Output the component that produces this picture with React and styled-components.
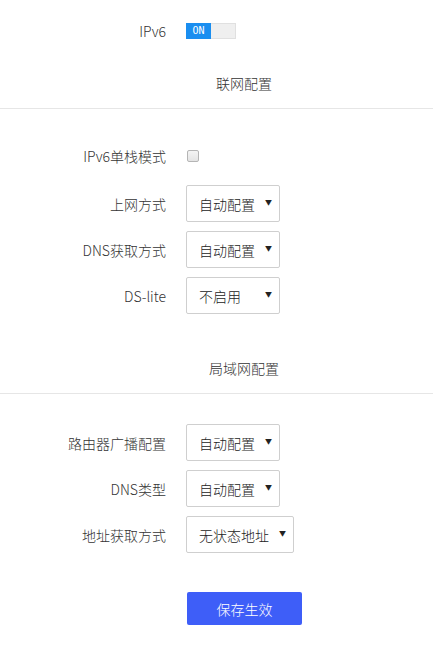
import React from 'react';
import styled, { createGlobalStyle } from 'styled-components';

const GlobalStyle = createGlobalStyle`
  body {
    margin: 0;
    background: #fff;
    font-family: 'Noto Sans CJK SC', 'Noto Sans', sans-serif;
    font-size: 14px;
    font-weight: 300;
    color: #333;
  }
`;

const Page = styled.div`
  width: 433px;
  padding-top: 23px;
  padding-bottom: 32px;
`;

const Row = styled.div`
  display: flex;
  align-items: center;
  gap: 20px;
  height: ${(p) => p.h || 37}px;
  margin-top: ${(p) => p.mt || 0}px;
`;

const Label = styled.div`
  width: 166px;
  text-align: right;
  line-height: 20px;
  color: #333;
  white-space: nowrap;
`;

const Toggle = styled.div`
  display: flex;
  width: 50px;
  height: 16px;
  box-sizing: border-box;
  border: 1px solid #e0e0e0;
  background: #efefef;
`;

const ToggleOn = styled.span`
  width: 25px;
  margin: -1px 0 -1px -1px;
  background: #1a8ef0;
  color: #fff;
  font-family: 'DejaVu Sans Mono', monospace;
  font-weight: 400;
  font-size: 10px;
  line-height: 16px;
  text-align: center;
`;

const SectionTitle = styled.div`
  margin-top: ${(p) => p.mt}px;
  margin-bottom: 15px;
  padding-left: 55px;
  text-align: center;
  line-height: 20px;
  color: #333;
`;

const Divider = styled.div`
  height: 1px;
  background: #e6e6e6;
`;

const Check = styled.span`
  display: block;
  width: 12px;
  height: 12px;
  margin-left: 1px;
  box-sizing: border-box;
  border: 1px solid #b5b5b5;
  border-radius: 2px;
  background: linear-gradient(#f4f4f4, #e4e4e4);
`;

const Select = styled.div`
  display: flex;
  align-items: center;
  justify-content: space-between;
  box-sizing: border-box;
  width: ${(p) => p.w || 94}px;
  height: 37px;
  padding: 0 7px 0 12px;
  border: 1px solid #cfcfcf;
  border-radius: 2px;
  background: #fff;
  color: #222;
`;

const Arrow = styled.span`
  font-size: 7px;
  color: #222;
  line-height: 1;
  margin-top: -3px;
`;

const SaveButton = styled.button`
  margin: 39px 0 0 187px;
  width: 115px;
  height: 33px;
  border: none;
  border-radius: 2px;
  background: #3e5ef8;
  color: #fff;
  font-family: inherit;
  font-weight: 300;
  font-size: 14px;
`;

const Dropdown = ({ value, w }) => (
  <Select w={w}>
    <span>{value}</span>
    <Arrow>▼</Arrow>
  </Select>
);

const wanRows = [
  ['上网方式', '自动配置'],
  ['DNS获取方式', '自动配置'],
  ['DS-lite', '不启用'],
];

const lanRows = [
  ['路由器广播配置', '自动配置'],
  ['DNS类型', '自动配置'],
  ['地址获取方式', '无状态地址', 108],
];

const App = () => (
  <Page>
    <GlobalStyle />
    <Row h={16}>
      <Label>IPv6</Label>
      <Toggle>
        <ToggleOn>ON</ToggleOn>
      </Toggle>
    </Row>

    <SectionTitle mt={34}>联网配置</SectionTitle>
    <Divider />

    <Row h={20} mt={37}>
      <Label>IPv6单栈模式</Label>
      <Check />
    </Row>
    {wanRows.map(([label, value], i) => (
      <Row key={label} mt={i === 0 ? 19 : 9}>
        <Label>{label}</Label>
        <Dropdown value={value} />
      </Row>
    ))}

    <SectionTitle mt={44}>局域网配置</SectionTitle>
    <Divider />

    {lanRows.map(([label, value, w], i) => (
      <Row key={label} mt={i === 0 ? 30 : 9}>
        <Label>{label}</Label>
        <Dropdown value={value} w={w} />
      </Row>
    ))}

    <SaveButton>保存生效</SaveButton>
  </Page>
);

export default App;
